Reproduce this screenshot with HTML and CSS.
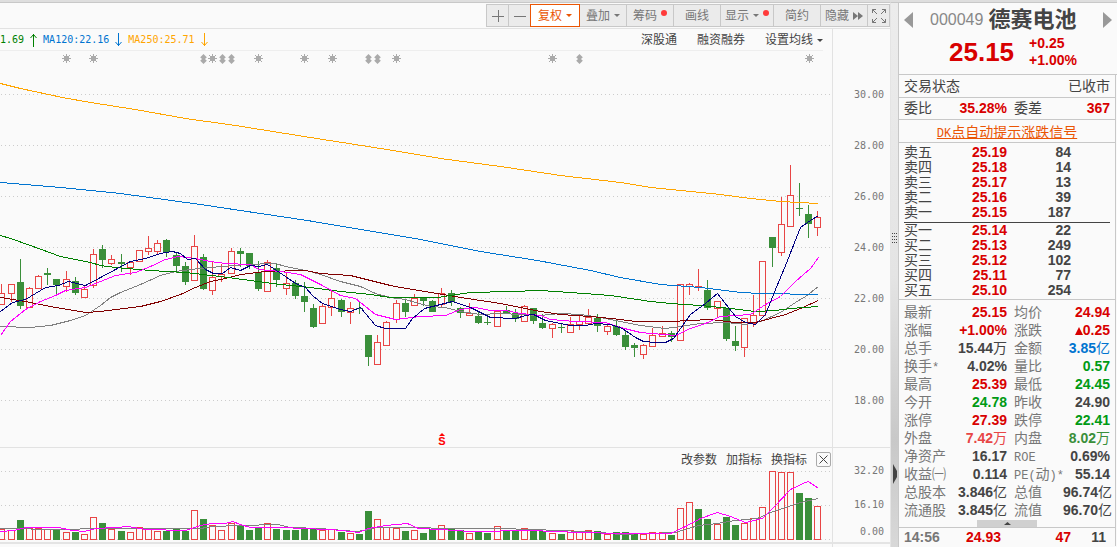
FILE: index.html
```html
<!DOCTYPE html>
<html lang="zh-CN">
<head>
<meta charset="utf-8">
<title>德赛电池 000049</title>
<link rel="stylesheet" href="styles.css">
</head>
<body>
<div class="app">
  <main class="chart">
    <div class="toolbar">
      <button class="tool tool-sq" aria-label="放大"><svg width="12" height="12" viewBox="0 0 12 12"><path d="M0 6.5h12M6.5 0v12"/></svg></button>
      <button class="tool tool-sq" aria-label="缩小"><svg width="12" height="12" viewBox="0 0 12 12"><path d="M0 6.5h12"/></svg></button>
      <button class="tool tool-active">复权<i class="caret"></i></button>
      <button class="tool">叠加<i class="caret"></i></button>
      <button class="tool">筹码<i class="dot"></i></button>
      <button class="tool">画线</button>
      <button class="tool tool-wide">显示<i class="caret"></i><i class="dot"></i></button>
      <button class="tool">简约</button>
      <button class="tool">隐藏<svg class="solid" width="10" height="8" viewBox="0 0 10 8"><path d="M0 0l5 4-5 4zM5 0l5 4-5 4z"/></svg></button>
      <button class="tool tool-sq" aria-label="全屏"><svg width="14" height="14" viewBox="0 0 14 14"><path d="M.5 4V.5H4M.5.5l4.500 4.500M10 .5h3.500V4M13.500.5L9 5M.5 10v3.500H4M.5 13.500L5 9M10 13.500h3.500V10M13.500 13.500L9 9"/></svg></button>
    </div>
    <div class="panes">
      <section class="plot">
        <header class="averages">
          <span class="ma ma60">1.69<svg width="9" height="14" viewBox="0 0 9 14"><path d="M4.500 1v13M1.500 5l3-3.500 3 3.500"/></svg></span>
          <span class="ma ma120">MA120:22.16<svg width="9" height="14" viewBox="0 0 9 14"><path d="M4.500 0v13M1.500 9l3 3.500 3-3.500"/></svg></span>
          <span class="ma ma250">MA250:25.71<svg width="9" height="14" viewBox="0 0 9 14"><path d="M4.500 0v13M1.500 9l3 3.500 3-3.500"/></svg></span>
          <nav class="links">
            <button class="link">深股通</button>
            <button class="link">融资融券</button>
            <button class="link link-menu">设置均线<i class="caret"></i></button>
          </nav>
        </header>
        <svg id="price" class="price"></svg>
      </section>
      <div class="axis axis-price"><span>30.00</span><span>28.00</span><span>26.00</span><span>24.00</span><span>22.00</span><span>20.00</span><span>18.00</span></div>
      <section class="plot">
        <header class="indicators">
          <button class="link">改参数</button>
          <button class="link">加指标</button>
          <button class="link">换指标</button>
          <button class="close" aria-label="关闭"><svg width="9" height="9" viewBox="0 0 9 9"><path d="M.5.5l8 8M8.500.5l-8 8"/></svg></button>
        </header>
        <svg id="volume" class="volume"></svg>
      </section>
      <div class="axis axis-volume"><span>32.20</span><span>16.10</span><span class="zero">0.00</span></div>
      <div class="next"><i class="next-close"></i></div>
      <div class="next next-axis"></div>
    </div>
  </main>

  <div class="splitter">
    <svg width="6" height="10" viewBox="0 0 6 10"><path d="M0 .5h6M0 3.500h6M0 6.500h6M0 9.500h6" stroke-dasharray="1 1"/></svg>
    <svg class="solid" width="4" height="20" viewBox="0 0 4 20"><path d="M0 0l4 7v6l-4 7z"/></svg>
  </div>

  <aside class="quote">
    <div class="stock">
      <div class="stock-name">
        <button class="step" aria-label="上一只"><svg width="9" height="16" viewBox="0 0 9 16"><path d="M9 0v16L0 8z"/></svg></button>
        <h1><span class="code">000049</span>德赛电池</h1>
        <button class="step" aria-label="下一只"><svg width="9" height="16" viewBox="0 0 9 16"><path d="M0 0v16l9-8z"/></svg></button>
      </div>
      <div class="last up"><b class="last-price">25.15</b><div class="change"><b>+0.25</b><b>+1.00%</b></div></div>
    </div>
    <div class="body">
      <div class="line"><span>交易状态</span><span>已收市</span></div>
      <table class="pairs committee"><tr><th>委比</th><td class="up">35.28%</td><th>委差</th><td class="up">367</td></tr></table>
      <div class="line promo"><a href="#"><span class="latin">DK</span>点自动提示涨跌信号</a></div>
      <div class="book">
        <table class="depth">
          <tr><th>卖五</th><td class="up">25.19</td><td>84</td></tr>
          <tr><th>卖四</th><td class="up">25.18</td><td>14</td></tr>
          <tr><th>卖三</th><td class="up">25.17</td><td>13</td></tr>
          <tr><th>卖二</th><td class="up">25.16</td><td>39</td></tr>
          <tr><th>卖一</th><td class="up">25.15</td><td>187</td></tr>
        </table>
        <table class="depth bids">
          <tr><th>买一</th><td class="up">25.14</td><td>22</td></tr>
          <tr><th>买二</th><td class="up">25.13</td><td>249</td></tr>
          <tr><th>买三</th><td class="up">25.12</td><td>102</td></tr>
          <tr><th>买四</th><td class="up">25.11</td><td>77</td></tr>
          <tr><th>买五</th><td class="up">25.10</td><td>254</td></tr>
        </table>
      </div>
      <table class="pairs stats">
        <tr><th>最新</th><td class="up">25.15</td><th>均价</th><td class="up">24.94</td></tr>
        <tr><th>涨幅</th><td class="up">+1.00%</td><th>涨跌</th><td class="up"><i class="rise"></i>0.25</td></tr>
        <tr><th>总手</th><td>15.44<span>万</span></td><th>金额</th><td class="money">3.85<span>亿</span></td></tr>
        <tr><th>换手<span class="latin">*</span></th><td>4.02%</td><th>量比</th><td class="down">0.57</td></tr>
        <tr><th>最高</th><td class="up">25.39</td><th>最低</th><td class="down">24.45</td></tr>
        <tr><th>今开</th><td class="down">24.78</td><th>昨收</th><td>24.90</td></tr>
        <tr><th>涨停</th><td class="up">27.39</td><th>跌停</th><td class="down">22.41</td></tr>
        <tr><th>外盘</th><td class="outer">7.42<span>万</span></td><th>内盘</th><td class="inner">8.02<span>万</span></td></tr>
        <tr><th>净资产</th><td>16.17</td><th><span class="latin">ROE</span></th><td>0.69%</td></tr>
        <tr><th>收益㈠</th><td>0.114</td><th><span class="latin">PE(</span>动<span class="latin">)*</span></th><td>55.14</td></tr>
        <tr><th>总股本</th><td>3.846<span>亿</span></td><th>总值</th><td>96.74<span>亿</span></td></tr>
        <tr><th>流通股</th><td>3.845<span>亿</span></td><th>流值</th><td>96.70<span>亿</span></td></tr>
      </table>
      <button class="fold" aria-label="收起"><svg width="7" height="3" viewBox="0 0 7 3"><path d="M0 3l3.500-3L7 3z"/></svg></button>
      <table class="ticks"><tr><td class="time">14:56</td><td class="up">24.93</td><td class="up">47</td><td>11</td></tr></table>
    </div>
  </aside>
</div>
<script src="chart.js"></script>
</body>
</html>
```
FILE: styles.css
```css
* { box-sizing: border-box; }
body {
  margin: 0;
  background: #fafafa;
  color: #444;
  font-family: "Liberation Sans", "Noto Sans CJK SC", sans-serif;
  font-size: 12px;
}
button {
  margin: 0;
  padding: 0;
  border: 0;
  background: none;
  color: inherit;
  font: inherit;
}
svg { display: block; fill: none; stroke: currentColor; }
.solid { fill: currentColor; stroke: none; }
table { border-collapse: collapse; width: 100%; table-layout: fixed; }
th, td { padding: 0; white-space: nowrap; }

.app {
  display: grid;
  grid-template-columns: minmax(0, 1fr) 7px 219px;
  min-height: 100vh;
  border-top: 2px solid #dedede;
}
.chart, .splitter, .quote { border-top: 1px solid #c8c8c8; }
.chart { border-right: 1px solid #e4e4e4; }

.toolbar {
  display: flex;
  justify-content: flex-end;
  height: 26px;
  padding-top: 1px;
  border-bottom: 1px solid #e2e2e2;
}
.tool {
  display: flex;
  align-items: center;
  justify-content: center;
  gap: 4px;
  width: 48px;
  height: 23px;
  margin-left: -1px;
  border: 1px solid #c8c8c8;
  background: #ebebeb;
  color: #777;
  line-height: 20px;
}
.tool-sq { width: 23px; }
.tool-wide { width: 54px; }
.tool-active {
  position: relative;
  width: 50px;
  border-color: #ea5504;
  background: #fff;
  color: #ea5504;
}
.caret {
  width: 0;
  height: 0;
  border: 3px solid transparent;
  border-top-color: currentColor;
  border-bottom: 0;
}
.dot {
  align-self: flex-start;
  width: 6px;
  height: 6px;
  margin-top: 5px;
  border-radius: 50%;
  background: #ff3b3b;
}

.panes { display: grid; grid-template-columns: minmax(0, 1fr) 58px; }
.plot { min-width: 0; }
.averages {
  display: flex;
  align-items: center;
  gap: 5px;
  height: 22px;
  margin-right: 9px;
  border-bottom: 1px solid #eee;
}
.ma {
  display: flex;
  align-items: center;
  gap: 5px;
  font: 10px "DejaVu Sans Mono", monospace;
}
.ma60 { color: #008000; }
.ma120 { color: #0074d0; }
.ma250 { color: #ffa500; }
.links { display: flex; gap: 20px; margin-left: auto; padding-top: 1px; }
.link { line-height: 18px; }
.link-menu { display: flex; align-items: center; gap: 4px; }
.price { width: 100%; height: 396px; }
.axis {
  display: flex;
  flex-direction: column;
  padding-right: 6px;
  border-left: 1px solid #e2e2e2;
  color: #777;
  font: 10px/51px "DejaVu Sans Mono", monospace;
  text-align: right;
}
.axis-price { padding-top: 40px; }
.axis-volume { padding-top: 6px; border-top: 1px solid #e2e2e2; line-height: 34px; }
.axis-volume .zero { line-height: 20px; }
.indicators {
  display: flex;
  align-items: center;
  justify-content: flex-end;
  gap: 9px;
  height: 23px;
  padding: 1px 1px 0 0;
  border-top: 1px solid #e2e2e2;
}
.close {
  display: grid;
  place-items: center;
  width: 15px;
  height: 15px;
  border: 1px solid #aaa;
  border-radius: 2px;
}
.volume { width: 100%; height: 71px; }
.next { display: flex; justify-content: flex-end; height: 6px; border-top: 2px solid #e4e4e4; overflow: hidden; }
.next-axis { border-left: 1px solid #e2e2e2; }
.next-close { width: 14px; height: 10px; margin: 3px 2px 0; border: 1px solid #aaa; }

.splitter {
  display: flex;
  flex-direction: column;
  align-items: center;
  gap: 221px;
  padding-top: 230px;
  background: linear-gradient(#ececec, #e4e4e4 50%, #c8c8c8 80%, #d8d8d8);
  color: #444;
}

.quote { border-left: 1px solid #c8c8c8; }
.up { color: #d80000; }
.down { color: #009a14; }
.money { color: #0074d0; }
.outer { color: #e84545; }
.inner { color: #3a8f3a; }
.stock { height: 72px; border-bottom: 1px solid #c8c8c8; }
.stock-name {
  display: flex;
  align-items: center;
  height: 32px;
  padding: 2px 5px 0;
}
.stock-name h1 {
  display: flex;
  flex: 1;
  align-items: center;
  gap: 5px;
  margin: 0;
  padding-left: 17px;
  font-size: 22px;
  font-weight: 700;
  line-height: 30px;
}
.stock-name .code { color: #888; font-size: 16px; font-weight: 400; }
.step { color: #999; }
.step path { fill: currentColor; stroke: none; }
.last { display: flex; align-items: center; gap: 15px; padding-left: 50px; }
.last-price { font-size: 26px; line-height: 28px; }
.change { display: flex; flex-direction: column; font-size: 14px; line-height: 17px; }

.body {
  margin-right: 1px;
  border-right: 1px solid #c8c8c8;
  font-size: 14px;
}
.line {
  display: flex;
  align-items: center;
  justify-content: space-between;
  height: 23px;
  padding: 0 5px;
  border-bottom: 1px solid #c8c8c8;
  line-height: 20px;
}
.latin { font-family: "Liberation Mono", monospace; font-size: 12px; line-height: 1; }
.promo { justify-content: center; padding-top: 1px; }
.promo a { color: #ea5504; }
th { font-weight: 400; text-align: left; }
td { font-weight: 700; text-align: right; }
td span { font-weight: 400; line-height: 1; }
.pairs th, .pairs td { height: 18px; line-height: 17px; }
.pairs th:first-child { width: 50px; padding-left: 5px; }
.pairs td:nth-child(2) { width: 58px; }
.pairs th:nth-child(3) { width: 56px; padding-left: 7px; }
.pairs td:nth-child(4) { padding-right: 5px; }
.committee { height: 22px; border-bottom: 1px solid #c8c8c8; }
.book { padding: 2px 5px 1px; border-bottom: 1px solid #c8c8c8; }
.depth th, .depth td { height: 15px; line-height: 15px; }
.depth th { width: 44px; }
.depth td:nth-child(2) { width: 59px; }
.depth td:nth-child(3) { padding-right: 39px; }
.bids { margin-top: 2px; border-top: 1px solid #444; }
.stats { margin-top: 3px; }
.stats th { color: #777; }
.rise {
  display: inline-block;
  border: 4px solid transparent;
  border-top: 0;
  border-bottom: 8px solid currentColor;
}
.fold {
  display: grid;
  place-items: center;
  width: 60px;
  height: 7px;
  margin: 1px auto 0;
  background: #d0d0d0;
}
.fold path { fill: currentColor; stroke: none; }
.ticks { border-top: 1px solid #c8c8c8; }
.ticks td { height: 18px; padding-top: 1px; line-height: 17px; }
.ticks .time { width: 48px; padding-left: 5px; color: #777; text-align: left; }
.ticks td:nth-child(2) { width: 54px; }
.ticks td:nth-child(3) { width: 70px; }
.ticks td:nth-child(4) { padding-right: 9px; }
```
FILE: chart.js
```js
const RED = '#e84545';
const GREEN = '#3a8f3a';
const PLOT_WIDTH = 833;

// One entry per day: colour, high, body top, body bottom, low, volume colour, volume top.
const days = `
r 284 293 304 304 r 529
r 284 284 293 301 r 530
g 259 282 305 308 g 520
r 287 288 307 307 r 528
r 275 276 288 288 r 528
g 268 273 274 284 r 529
g 279 279 284 293 g 530
r 271 279 286 291 r 532
g 277 281 292 294 g 532
r 286 289 297 297 r 534
r 249 254 285 287 r 517
g 245 249 259 267 g 523
r 255 259 263 264 r 529
g 254 262 263 271 g 531
r 261 262 267 274 r 532
r 250 250 261 261 r 527
r 236 248 251 254 r 529
r 240 243 251 253 r 531
g 239 240 251 256 g 531
g 253 255 265 272 g 529
g 262 266 281 284 g 531
r 235 246 280 280 r 510
g 254 257 288 289 g 519
r 261 277 290 294 r 525
r 264 274 276 281 r 530
r 248 251 273 273 r 523
g 248 251 253 266 g 525
g 253 253 265 268 g 530
g 261 272 288 290 g 528
r 260 262 291 291 r 523
g 264 268 279 286 g 529
r 273 283 288 294 g 530
g 280 283 295 298 g 530
g 282 296 301 311 g 528
g 304 308 326 327 g 529
r 303 306 323 323 r 530
r 290 298 307 315 r 529
g 299 300 311 316 g 532
r 302 308 312 323 r 533
g 301 308 308 313 g 534
g 335 335 356 365 g 511
r 335 342 364 364 r 519
r 321 322 345 345 r 527
r 300 303 319 322 r 528
g 299 303 311 316 g 531
r 294 298 305 305 r 530
g 297 297 300 305 g 533
g 300 301 311 311 g 529
r 288 293 304 306 r 525
g 290 293 301 305 g 529
g 307 308 312 317 g 530
r 303 313 315 315 r 533
g 311 316 322 323 g 531
g 316 322 322 324 g 533
r 311 311 326 326 r 526
g 306 310 312 313 g 531
g 309 313 318 321 g 531
r 305 306 321 321 r 528
g 308 308 320 323 g 530
g 314 323 327 328 g 531
r 323 324 328 337 r 533
g 323 327 327 332 g 534
r 317 324 332 332 r 530
r 316 321 324 329 r 531
r 309 317 323 323 r 530
g 314 318 325 331 g 531
r 325 326 331 334 r 534
g 320 326 334 335 g 532
g 331 335 346 349 g 532
g 343 345 347 356 g 534
r 344 345 354 358 r 534
r 328 335 346 346 r 532
r 326 333 336 336 r 532
g 331 333 336 341 g 535
r 284 284 340 340 r 508
r 283 284 286 294 r 502
r 269 286 287 290 g 509
g 280 290 307 309 g 519
r 301 301 308 317 r 524
g 308 308 338 340 g 517
g 326 341 345 350 g 525
r 318 318 347 356 r 523
r 295 315 323 326 r 518
r 261 261 315 315 r 507
g 237 237 247 266 r 471
r 197 224 252 255 r 472
r 165 195 226 226 r 472
g 183 208 208 215 g 493
g 205 214 223 237 g 498
r 211 217 227 235 r 506`.trim().split('\n').map(row => row.split(' '));

const averages = {
  '#808080': '0,326 30,327 50,325 70,320 85,315 100,305 110,297 120,292 140,284 160,275 175,271 190,269 210,267 245,264 275,263 285,266 310,271 320,274 340,281 360,286 375,293 390,297 405,299 415,302 430,306 445,307 460,311 480,314 500,313 540,315 560,313 580,314 600,317 620,321 640,325 665,328 680,326 700,323 725,322 745,324 760,321 780,312 795,302 805,296 818,286',
  '#800000': '0,297 25,301 50,306 85,312 100,311 115,309 140,306 160,301 180,294 195,287 210,281 225,278 240,274 265,271 305,270 320,273 350,275 370,280 390,285 400,287 430,292 460,297 500,303 540,311 560,314 590,316 620,319 635,321 670,321 710,319 735,322 755,322 770,318 785,314 800,308 818,300',
  '#008000': '0,235 10,238 30,245 60,256 90,262 100,265 115,267 150,270 185,272 220,276 250,280 280,284 310,287 340,291 370,294 390,297 437,297 450,295 470,292 510,291 540,290 570,292 610,295 650,301 670,303 700,305 730,308 755,311 775,310 790,308 818,306',
  '#0074d0': '0,182 60,187 120,193 200,204 260,213 307,220 420,239 480,251 537,260 590,270 620,277 660,284 700,287 740,292 760,293 818,294',
  '#ffa500': '0,83 20,88 62,97 90,102 135,109 185,118 235,125 310,137 380,148 440,158 500,166 560,175 620,182 650,187 720,194 750,198 780,201 818,203',
  '#ff00ff': '0,335 10,321 25,309 40,301 55,295 65,290 85,287 100,281 115,275 135,272 150,266 165,259 178,256 195,258 210,261 225,263 250,264 258,269 280,271 300,274 320,284 340,295 355,298 375,314 395,319 420,316 445,315 460,309 475,307 490,310 505,310 520,313 540,315 550,319 575,321 605,322 620,327 640,332 675,335 690,328 705,323 720,316 750,314 765,304 780,296 795,281 810,268 818,257',
  '#000080': '0,311 12,302 25,299 45,287 58,285 68,281 85,285 100,277 115,269 130,261 145,258 160,253 172,251 180,253 187,259 195,258 205,269 213,273 222,273 230,267 240,270 250,265 258,266 267,264 285,276 295,283 305,287 313,296 322,303 340,309 350,311 360,307 375,325 385,328 405,328 412,318 424,308 440,304 452,301 470,307 490,317 515,318 525,315 533,314 545,320 570,325 585,325 595,323 610,324 622,328 635,337 643,341 655,342 665,342 673,338 690,314 705,303 717,293 735,316 745,322 755,324 765,314 775,289 785,265 800,227 810,220 818,215'
};

const volumeAverages = {
  '#808080': '0,528 60,529 100,528 200,528 212,526 240,525 277,524 290,527 320,528 355,531 365,530 375,527 420,527 440,528 500,528 560,530 600,532 620,534 675,532 698,525 717,523 735,520 757,518 770,512 785,507 800,502 818,498',
  '#ff00ff': '0,531 14,530 25,527 58,527 72,530 84,531 95,528 115,527 128,526 145,529 185,530 200,525 212,523 225,523 232,521 240,524 250,527 285,527 300,528 330,529 350,531 358,532 368,528 385,525 407,523 418,528 440,529 470,531 530,530 580,532 620,533 670,533 685,526 700,518 717,512 730,516 745,522 762,518 775,505 790,489 805,482 808,481 818,488'
};

const stars = [66, 93, 212, 258, 304, 332, 396, 552, 809];
const shifts = [203, 222, 231, 368, 377, 579];

const dayX = i => Math.floor(11 + 9.17 * (i - 1));
const grid = ys => ys.map(y =>
  `<path stroke="#ccc" stroke-dasharray="1 3" d="M-2999 ${y}.5H${PLOT_WIDTH}"/>`).join('');
const lines = set => Object.entries(set).map(([color, points]) =>
  `<polyline stroke="${color}" transform="translate(.5 .5)" points="${points}"/>`).join('');

function bar(color, x, top, bottom) {
  return color === 'r'
    ? `<rect x="${x - 2.5}" y="${top + .5}" width="6" height="${bottom - top}" fill="#fafafa" stroke="${RED}"/>`
    : `<rect x="${x - 3}" y="${top}" width="7" height="${bottom - top + 1}" fill="${GREEN}" stroke="none"/>`;
}

function candle([color, high, top, bottom, low], i) {
  const x = dayX(i);
  return `<path stroke="${color === 'r' ? RED : GREEN}" d="M${x + .5} ${high}V${+low + 1}"/>` +
    bar(color, x, +top, +bottom);
}

const star = x => `<g stroke="#aaa" transform="translate(${x} 58)"><rect x="-2" y="-2" width="5" height="5" fill="#aaa" stroke="none"/><path d="M-4 .5h9M.5-4v9M-3-3l7 7M4-3l-7 7"/></g>`;
const shift = x => `<path fill="#aaa" stroke="none" d="M${x + .5} 54l3 3v1h-1v2h1v1l-3 3-3-3v-1h1v-2h-1v-1z"/>`;

document.getElementById('price').innerHTML =
  `<g shape-rendering="crispEdges">${grid([94, 145, 196, 247, 298, 349, 400])}${days.map(candle).join('')}${lines(averages)}${stars.map(star).join('')}</g>` +
  shifts.map(shift).join('') +
  `<path fill="#f00" stroke="none" d="M442 433l3 3h-6z"/>` +
  `<text x="442" y="445" fill="#f00" stroke="none" text-anchor="middle" font-size="11" font-weight="700">S</text>`;

document.getElementById('volume').innerHTML =
  `<g shape-rendering="crispEdges">${grid([471, 505, 539])}${days.map((d, i) => bar(d[5], dayX(i), +d[6], 539)).join('')}${lines(volumeAverages)}</g>`;

// The newest day stays at the right edge whatever the pane's width.
function fit() {
  for (const [id, top, height] of [['price', 51, 396], ['volume', 470, 71]]) {
    const svg = document.getElementById(id);
    const width = svg.clientWidth || svg.getBoundingClientRect().width;
    svg.setAttribute('viewBox', `${PLOT_WIDTH - 1 - width} ${top} ${width} ${height}`);
  }
}
fit();
addEventListener('resize', fit);
```
